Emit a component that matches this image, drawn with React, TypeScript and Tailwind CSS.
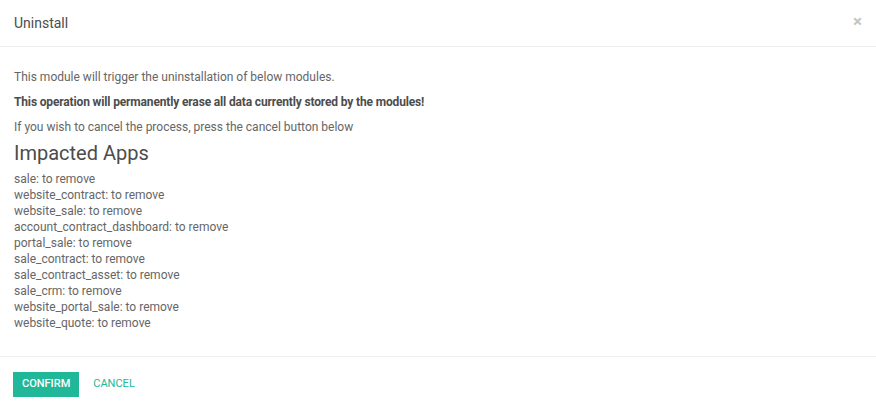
const modules = [
    "sale",
    "website_contract",
    "website_sale",
    "account_contract_dashboard",
    "portal_sale",
    "sale_contract",
    "sale_contract_asset",
    "sale_crm",
    "website_portal_sale",
    "website_quote",
];

export default function App() {
    return (
        <div
            className="w-[876px] h-[412px] bg-white text-[#666666] flex flex-col overflow-hidden"
            style={{ fontFamily: "Roboto, 'Noto Sans', sans-serif" }}
        >
            {/* Header */}
            <div className="h-[47px] shrink-0 flex items-center justify-between pl-[14px] pr-[14px] border-b border-[#eeeeee]">
                <h4 className="text-[14px] text-[#4c4c4c]">Uninstall</h4>
                <button className="text-[#c4c4c4] text-[17px] font-bold leading-none -mt-[4px]">×</button>
            </div>

            {/* Body */}
            <div className="flex-1 pl-[14px] pt-[22px] text-[12px]">
                <p className="leading-[17px] mb-[8px]">This module will trigger the uninstallation of below modules.</p>
                <p className="leading-[17px] mb-[8px] font-bold text-[#4c4c4c] tracking-[-0.15px]">
                    This operation will permanently erase all data currently stored by the modules!
                </p>
                <p className="leading-[17px] mb-[5px]">If you wish to cancel the process, press the cancel button below</p>
                <h3 className="text-[20px] leading-[24px] text-[#4c4c4c] mb-[6px]">Impacted Apps</h3>
                <div className="flex flex-col">
                    {modules.map((m) => (
                        <span key={m} className="leading-[16px]">
                            {m}: to remove
                        </span>
                    ))}
                </div>
            </div>

            {/* Footer */}
            <div className="h-[56px] shrink-0 border-t border-[#eeeeee] flex items-start gap-[14px] pl-[13px] pt-[15px]">
                <button className="h-[25px] px-[9px] bg-[#21b799] text-white text-[11px] font-medium uppercase">
                    Confirm
                </button>
                <button className="h-[25px] text-[#21b799] text-[11px] uppercase">Cancel</button>
            </div>
        </div>
    );
}
